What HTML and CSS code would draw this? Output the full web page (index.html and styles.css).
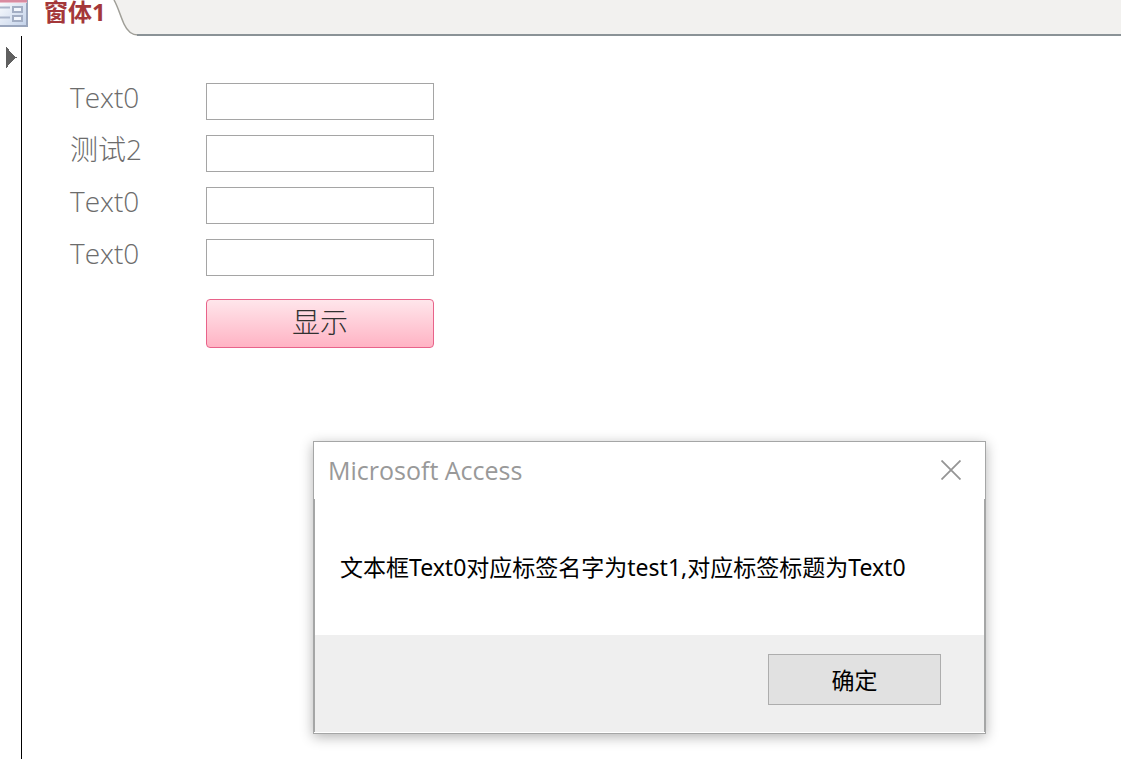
FILE: index.html
```html
<!DOCTYPE html>
<html lang="zh-CN">
<head>
<meta charset="utf-8">
<title>窗体1</title>
<link rel="stylesheet" href="styles.css">
</head>
<body>
<div class="app">
  <header class="tabbar">
    <div class="tab">
      <svg class="tab-icon" width="28" height="27" viewBox="0 0 28 27" aria-hidden="true">
        <defs>
          <linearGradient id="paper" x1="0" y1="0" x2="1" y2="1"><stop offset="0" stop-color="#fff"/><stop offset="1" stop-color="#c3d2ea"/></linearGradient>
        </defs>
        <rect x="-2" y="-2" width="29" height="28" fill="url(#paper)" stroke="#9aa6bd" stroke-width="2"/>
        <rect x="0" y="0" width="27" height="2" fill="#d98ba0"/>
        <path d="M0 2.5H27" stroke="#eabdca"/>
        <path d="M0 7.5H10M0 17.5H10" stroke="#a9b4c9" stroke-width="2"/>
        <rect x="13" y="7" width="9" height="5" fill="#f4f7fd" stroke="#a3aec4" stroke-width="2"/>
        <rect x="13" y="16" width="9" height="5" fill="#f4f7fd" stroke="#a3aec4" stroke-width="2"/>
      </svg>
      <span class="tab-title">窗体1</span>
    </div>
    <svg class="tab-edge" width="30" height="36" viewBox="0 0 30 36" aria-hidden="true">
      <path d="M4 0C8 7 10 15 14 24Q19 35 28 35H30V0Z" fill="#f2f1ef"/>
      <path d="M4 0C8 7 10 15 14 24Q19 35 28 35H30" fill="none" stroke="#a09f98" stroke-width="1.5"/>
      <path d="M27 35H30" stroke="#8a9296" stroke-width="2"/>
    </svg>
    <div class="tab-fill"></div>
  </header>
  <main class="workspace">
    <aside class="selector">
      <svg width="12" height="22" viewBox="0 0 12 22" shape-rendering="crispEdges" aria-hidden="true"><path d="M0 0H1V1H2V2H3V4H4V5H5V6H6V7H7V8H8V9H9V10H11V11H9V12H8V13H7V14H6V15H5V16H4V17H3V18H2V20H1V21H0Z" fill="#606060"/></svg>
    </aside>
    <form class="form">
      <label class="label" for="t1">Text0</label><input class="field" id="t1" type="text">
      <label class="label" for="t2">测试2</label><input class="field" id="t2" type="text">
      <label class="label" for="t3">Text0</label><input class="field" id="t3" type="text">
      <label class="label" for="t4">Text0</label><input class="field" id="t4" type="text">
      <button class="show" type="button">显示</button>
    </form>
  </main>
  <section class="dialog" role="dialog" aria-labelledby="dialog-title">
    <div class="dialog-head">
      <h1 class="dialog-title" id="dialog-title">Microsoft Access</h1>
      <button class="close" type="button" aria-label="关闭">
        <svg width="20" height="20" viewBox="0 0 20 20" aria-hidden="true"><path d="M0.5 0.5L19.5 19.5M19.5 0.5L0.5 19.5" stroke="#959595" stroke-width="1.8"/></svg>
      </button>
    </div>
    <p class="message">文本框Text0对应标签名字为test1,对应标签标题为Text0</p>
    <div class="dialog-foot"><button class="ok" type="button">确定</button></div>
  </section>
</div>
</body>
</html>
```

FILE: styles.css
```css
* { box-sizing: border-box; }
body {
  margin: 0;
  background: #fff;
  font-family: "Noto Sans", "Noto Sans CJK SC", sans-serif;
}
button { font-family: inherit; cursor: pointer; }
.app {
  position: relative;
  display: flex;
  flex-direction: column;
  min-height: 100vh;
  overflow: hidden;
}
.tabbar { display: flex; height: 36px; }
.tab { display: flex; align-items: flex-start; gap: 16px; width: 110px; }
.tab-icon { flex: none; }
.tab-title {
  color: #a4373a;
  font-size: 24px;
  line-height: 24px;
  font-weight: 700;
  white-space: nowrap;
}
.tab-edge { flex: none; }
.tab-fill { flex: 1; background: #f2f1ef; border-bottom: 2px solid #8a9296; }
.workspace { display: flex; flex: 1; }
.selector { width: 22px; padding: 11px 0 0 6px; border-right: 1px solid #000; }
.selector svg { display: block; }
.form {
  flex: 1;
  display: grid;
  grid-template-columns: 136px 228px;
  grid-auto-rows: 37px;
  row-gap: 15px;
  align-content: start;
  padding: 47px 0 0 48px;
}
.label {
  color: #6c6c6c;
  font-family: "Open Sans", "Noto Sans CJK SC", sans-serif;
  font-size: 28px;
  line-height: 28px;
  font-weight: 300;
}
.field { width: 100%; height: 37px; padding: 0 4px; border: 1px solid #a5a5a5; font-size: 24px; background: #fff; }
.show {
  grid-column: 2;
  height: 49px;
  margin-top: 8px;
  padding: 0 0 4px;
  border: 1px solid #e8638a;
  border-radius: 4px;
  background: linear-gradient(#ffe6eb, #ffb3c4);
  color: #303030;
  font-size: 28px;
  line-height: 40px;
  font-weight: 300;
}
.dialog {
  position: absolute;
  left: 313px;
  top: 441px;
  width: 673px;
  border: 1px solid #a5a6a6;
  background: #fff;
  box-shadow: 0 3px 12px rgba(0, 0, 0, 0.3);
}
.dialog-head { display: flex; align-items: center; justify-content: space-between; height: 57px; padding: 0 24px 2px 14px; }
.dialog-title {
  margin: 0;
  color: #999;
  font-family: "Open Sans", sans-serif;
  font-size: 25px;
  line-height: 32px;
  font-weight: 400;
}
.close { display: flex; padding: 0; border: 0; background: none; }
.message {
  margin: 0;
  padding: 52px 24px 51px 25px;
  border: solid #a5a6a6;
  border-width: 0 1px;
  color: #000;
  font-size: 23px;
  line-height: 33px;
  white-space: nowrap;
}
.dialog-foot {
  display: flex;
  justify-content: flex-end;
  margin-bottom: 1px;
  padding: 19px 43px 27px;
  border: solid #a5a6a6;
  border-width: 0 1px;
  background: #efefef;
}
.ok { width: 173px; height: 51px; padding: 0 0 2px; border: 1px solid #adadad; background: #e1e1e1; color: #000; font-size: 23px; }
```
